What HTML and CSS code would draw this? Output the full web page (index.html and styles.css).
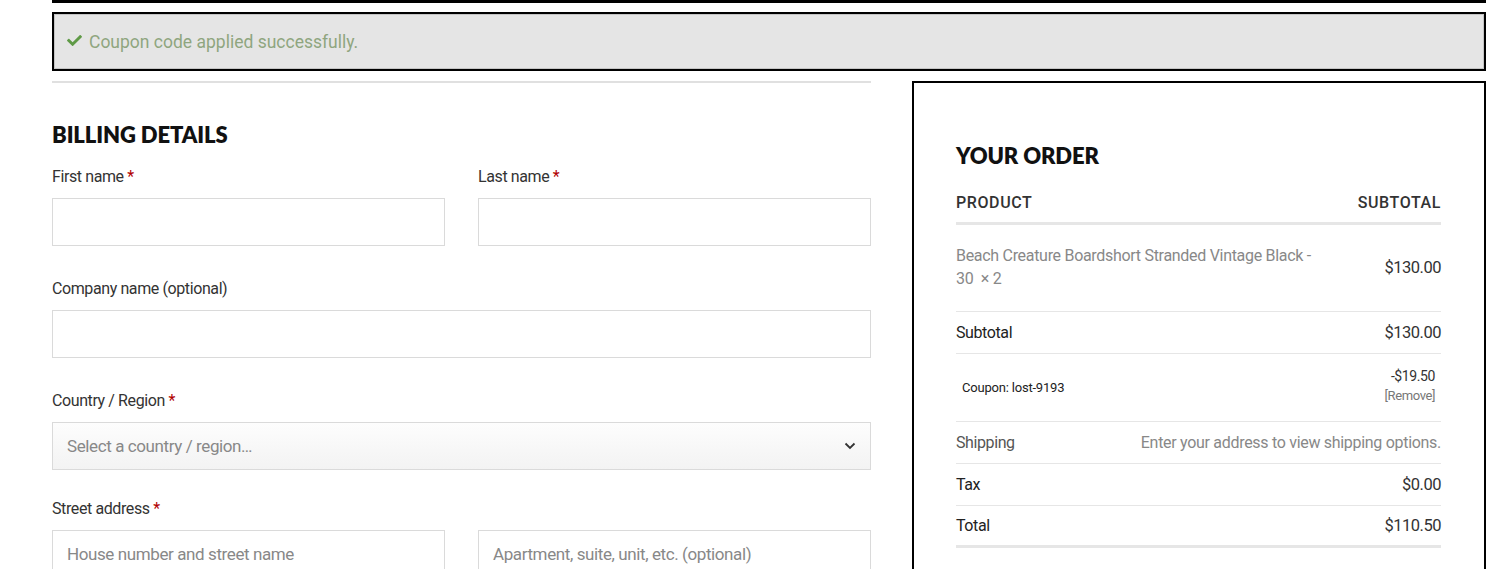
FILE: index.html
```html
<!DOCTYPE html>
<html>
<head>
<meta charset="utf-8">
<link rel="stylesheet" href="styles.css">
</head>
<body>
<div class="page">
  <div class="topbar"></div>
  <div class="notice">
    <svg class="check" viewBox="0 0 512 512" width="17" height="15"><path d="M173.9 439.4L7.5 273c-10-10-10-26.2 0-36.2l36.2-36.2c10-10 26.2-10 36.2 0L192 312.7 432.1 72.6c10-10 26.2-10 36.2 0l36.2 36.2c10 10 10 26.2 0 36.2L210.1 439.4c-10 10-26.2 10-36.2 0z" fill="#5f9a46"/></svg>
    <span>Coupon code applied successfully.</span>
  </div>
  <div class="columns">
    <div class="billing">
      <h3 class="title">BILLING DETAILS</h3>
      <div class="form">
        <div class="field">
          <label>First name <span class="req">*</span></label>
          <div class="input"></div>
        </div>
        <div class="field">
          <label>Last name <span class="req">*</span></label>
          <div class="input"></div>
        </div>
        <div class="field wide">
          <label>Company name (optional)</label>
          <div class="input"></div>
        </div>
        <div class="field wide short">
          <label>Country / Region <span class="req">*</span></label>
          <div class="input select">
            <span class="ph">Select a country / region…</span>
            <svg width="12" height="8" viewBox="0 0 12 8"><path d="M1.5 1.5L6 6l4.5-4.5" fill="none" stroke="#333" stroke-width="1.8"/></svg>
          </div>
        </div>
        <div class="field">
          <label>Street address <span class="req">*</span></label>
          <div class="input"><span class="ph">House number and street name</span></div>
        </div>
        <div class="field">
          <label class="blank">&nbsp;</label>
          <div class="input"><span class="ph">Apartment, suite, unit, etc. (optional)</span></div>
        </div>
      </div>
    </div>
    <div class="order">
      <h3 class="title order-title">YOUR ORDER</h3>
      <div class="table">
        <div class="row head">
          <span>PRODUCT</span><span>SUBTOTAL</span>
        </div>
        <div class="row item">
          <span class="pname">Beach Creature Boardshort Stranded Vintage Black -<br>30&nbsp; × 2</span>
          <span class="amt">$130.00</span>
        </div>
        <div class="row">
          <span>Subtotal</span><span class="amt">$130.00</span>
        </div>
        <div class="row coupon">
          <span class="clabel">Coupon: lost-9193</span>
          <span class="cval"><span class="disc">-$19.50</span><span class="remove">[Remove]</span></span>
        </div>
        <div class="row">
          <span class="muted-label">Shipping</span><span class="gray">Enter your address to view shipping options.</span>
        </div>
        <div class="row">
          <span>Tax</span><span class="amt">$0.00</span>
        </div>
        <div class="row total">
          <span>Total</span><span class="amt">$110.50</span>
        </div>
      </div>
    </div>
  </div>
</div>
</body>
</html>
```
FILE: styles.css
```css
* { box-sizing: border-box; }
html, body { margin: 0; padding: 0; background: #fff; }
body {
  font-family: Roboto, "Liberation Sans", sans-serif;
  color: #333;
  overflow: hidden;
}
.page {
  margin-left: 52px;
  width: 1434px;
}
.topbar {
  height: 3px;
  background: #000;
}
.notice {
  margin-top: 9px;
  height: 59px;
  border: 2px solid #000;
  box-shadow: inset 0 0 0 1px #c4c4c4;
  background: #e5e5e5;
  display: flex;
  align-items: center;
  padding-left: 12px;
  gap: 6px;
  font-size: 17.5px;
  color: #8fa57f;
  letter-spacing: 0;
}
.check { margin-top: -2px; }
.columns {
  margin-top: 10px;
  display: flex;
  gap: 41px;
  align-items: flex-start;
}
.billing {
  width: 819px;
  border-top: 2px solid #e0e0e0;
}
.title {
  margin: 0;
  font-family: Lato, "Open Sans", sans-serif;
  font-weight: 800;
  font-size: 22px;
  line-height: 26px;
  color: #111;
  letter-spacing: -0.1px;
}
.billing .title { margin-top: 39px; }
.form {
  display: grid;
  grid-template-columns: 393px 393px;
  column-gap: 33px;
  margin-top: 19px;
}
.field { margin-bottom: 33px; }
.field.short { margin-bottom: 29px; }
.field.wide { grid-column: 1 / span 2; }
label {
  display: block;
  font-size: 16px;
  line-height: 20px;
  letter-spacing: -0.4px;
  color: #333;
  margin-bottom: 11px;
}
.req { color: #b10000; }
.input {
  height: 48px;
  border: 1px solid #dadada;
  background: #fff;
  display: flex;
  align-items: center;
  padding: 0 14px;
}
.ph {
  font-size: 17px;
  color: #888;
  letter-spacing: -0.4px;
}
.select {
  background: linear-gradient(#fdfdfd, #f3f3f3);
  justify-content: space-between;
  padding-right: 14px;
}
.order {
  width: 574px;
  height: 520px;
  border: 2px solid #000;
  padding: 60px 43px 0 42px;
}
.order-title { margin-bottom: 18px; }
.table { width: 485px; }
.row {
  display: flex;
  justify-content: space-between;
  align-items: center;
  border-bottom: 1px solid #e6e6e6;
  min-height: 42px;
  font-size: 16px;
  letter-spacing: -0.4px;
  color: #222;
}
.row.head {
  min-height: 38px;
  border-bottom: 3px solid #e6e6e6;
  font-weight: 500;
  letter-spacing: 0.6px;
  color: #333;
  padding-bottom: 4px;
}
.row.item {
  min-height: 87px;
  padding-bottom: 2px;
}
.pname {
  color: #888;
  line-height: 23px;
  font-size: 16px;
  letter-spacing: -0.3px;
}
.amt { font-size: 16.5px; color: #333; letter-spacing: -0.5px; }
.row.coupon { min-height: 68px; }
.clabel { font-size: 13px; padding-left: 6px; color: #222; letter-spacing: -0.2px; }
.cval {
  display: flex;
  flex-direction: column;
  align-items: flex-end;
  padding-right: 6px;
  line-height: 19px;
  margin-top: -4px;
}
.disc { font-size: 14px; color: #333; }
.remove { font-size: 13px; color: #777; }
.muted-label { color: #555; }
.gray { color: #888; font-size: 16px; letter-spacing: -0.3px; }
.row.total { border-bottom: 3px solid #e6e6e6; }
```
